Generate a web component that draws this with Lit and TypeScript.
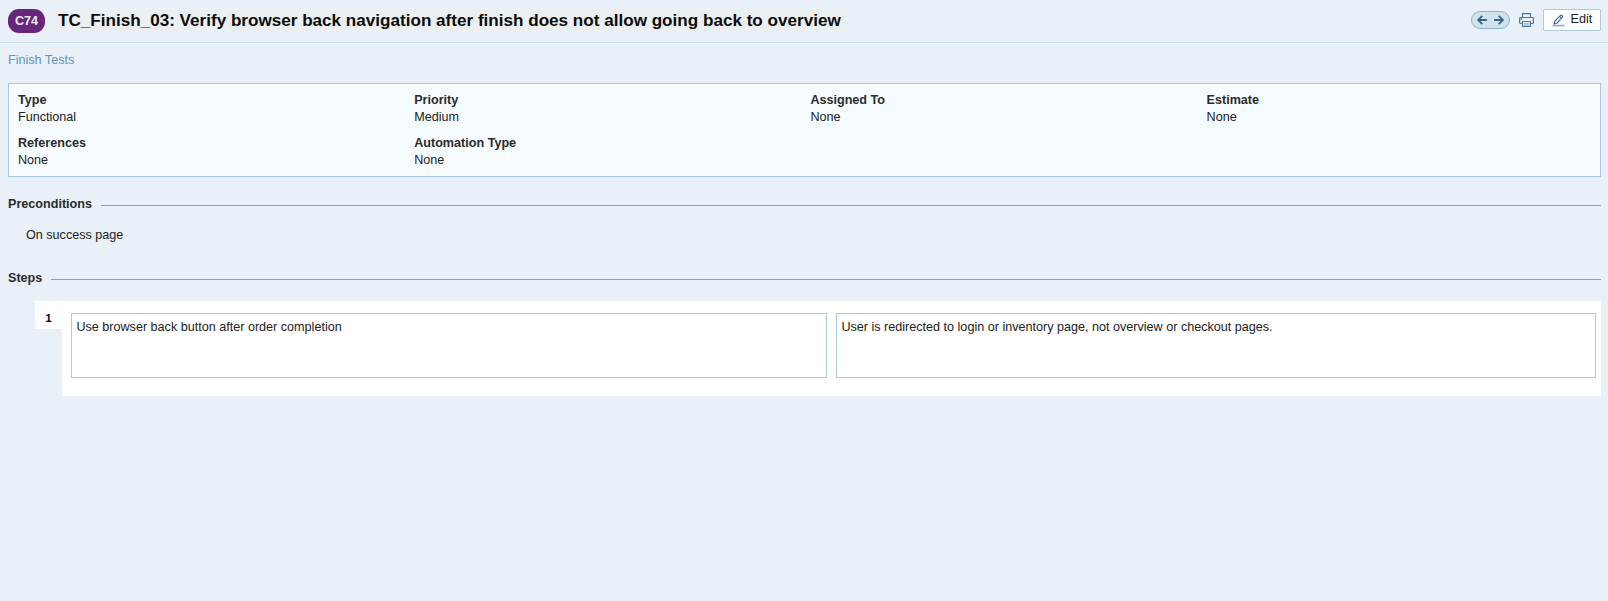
import { LitElement, html, css } from "lit";
import { customElement } from "lit/decorators.js";

const FIELDS = [
  ["Type", "Functional"],
  ["Priority", "Medium"],
  ["Assigned To", "None"],
  ["Estimate", "None"],
  ["References", "None"],
  ["Automation Type", "None"],
];

const STEPS = [
  {
    action: "Use browser back button after order completion",
    expected: "User is redirected to login or inventory page, not overview or checkout pages.",
  },
];

@customElement("app-root")
export class AppRoot extends LitElement {
  static styles = css`
    :host {
      display: block;
      box-sizing: border-box;
      min-height: 601px;
      background: #e9f0f7;
      color: #222;
      font: 12.6px/17px "Liberation Sans", Arial, sans-serif;
    }
    * { box-sizing: border-box; }
    .header {
      display: flex;
      align-items: flex-start;
      height: 43px;
      padding: 9px 7px 0 8px;
      border-bottom: 1px solid #cbdfea;
    }
    .badge {
      width: 37px;
      height: 24px;
      border-radius: 11px;
      background: #66267b;
      color: #f3e9f5;
      font-weight: bold;
      line-height: 24px;
      text-align: center;
    }
    .title {
      margin: 0 0 0 8px;
      padding: 0 5px;
      height: 23px;
      background: #ebeff2;
      color: #0c0c0c;
      font-size: 17.1px;
      line-height: 23px;
      font-weight: bold;
      white-space: nowrap;
    }
    .tools { display: flex; margin-left: auto; }
    .nav {
      display: flex;
      justify-content: space-between;
      align-items: center;
      width: 39px;
      height: 18px;
      margin-top: 2px;
      padding: 0 5px;
      border: 1px solid #8db6d0;
      border-radius: 9px;
      background: #d0e2ec;
    }
    .print { margin: 4px 0 0 9px; }
    .edit {
      display: flex;
      width: 58px;
      height: 22px;
      margin-left: 9px;
      padding: 0 0 0 8px;
      border: 1px solid #adc9dd;
      border-radius: 1px;
      background: #fff;
      line-height: 18px;
      color: #222233;
    }
    .edit svg { margin: 4px 5.6px 0 0; flex: none; }
    svg { display: block; }
    .crumb { padding: 9px 8px 0; height: 40px; color: #5b97c1; }
    .card {
      display: grid;
      grid-template-columns: repeat(4, 396.2px);
      row-gap: 9px;
      height: 94px;
      margin: 0 7px 0 8px;
      padding: 8px 0 0 9px;
      border: 1px solid #a9c8dc;
      background: #f6fbff;
      align-content: start;
      overflow: hidden;
    }
    .label { font-weight: bold; color: #2b2b2b; }
    .section {
      display: flex;
      align-items: flex-start;
      margin: 0 7px 0 8px;
      font-weight: bold;
      color: #2b2b2b;
    }
    .section::after {
      content: "";
      flex: 1;
      height: 1px;
      margin: 9px 0 0 9px;
      background: #7ba6c9;
    }
    .pre-head { margin-top: 19px; }
    .pre { padding: 14px 0 0 26px; height: 57px; }
    .step { display: flex; align-items: flex-start; margin: 14px 7px 0 35px; }
    .num {
      width: 27px;
      height: 28px;
      background: #fff;
      color: #190014;
      font-size: 11.6px;
      font-weight: bold;
      line-height: 34px;
      text-align: center;
    }
    .body {
      display: grid;
      grid-template-columns: 756px 760px;
      column-gap: 9px;
      flex: 1;
      height: 95px;
      padding: 12px 5px 0 9px;
      background: #fff;
    }
    .cell { height: 65px; padding: 5px 4.4px; border: 1px solid #adc9d9; }
  `;

  render() {
    return html`
      <header class="header">
        <span class="badge">C74</span>
        <h1 class="title">TC_Finish_03: Verify browser back navigation after finish does not allow going back to overview</h1>
        <div class="tools">
          <div class="nav">
            <svg width="10" height="10" viewBox="0 0 10 10" fill="none" stroke="#346887" stroke-width="1.8"><path d="M9.9 5H1.3M5.3 .8L1.1 5l4.2 4.2" /></svg>
            <svg width="10" height="10" viewBox="0 0 10 10" fill="none" stroke="#346887" stroke-width="1.8"><path d="M.1 5h8.6M4.7 .8l4.2 4.2-4.2 4.2" /></svg>
          </div>
          <svg class="print" width="15" height="14" viewBox="0 0 15 14" fill="none" stroke="#4b7b9b" stroke-width="1.15">
            <path d="M3.5 4V.6h8V4M3.5 10.5H1.6a1 1 0 0 1-1-1V5.5q0-1 1-1h11.8q1 0 1 1v4a1 1 0 0 1-1 1h-1.9" />
            <path d="M3.5 8.5h8v4.9h-8z" fill="#e9f0f7" />
            <path d="M5 10.5h5M5 11.8h5" stroke="#a2c5dd" />
            <path d="M1.3 6.1h2" stroke="#28a878" stroke-width="1.4" />
          </svg>
          <div class="edit">
            <svg width="13" height="13" viewBox="0 0 13 13" fill="none" stroke="#3f6c8a" stroke-width="1.15">
              <path d="M2.2 10l.7-3L8.6 1.3q.7-.6 1.4 0l.5.5q.6.7 0 1.4L4.9 9.2zM7.6 2.4l1.9 1.9" />
              <path d="M.5 11.6h12" stroke="#85b1d0" stroke-width="1.6" />
            </svg>Edit
          </div>
        </div>
      </header>
      <div class="crumb">Finish Tests</div>
      <section class="card">
        ${FIELDS.map(([k, v]) => html`<div><div class="label">${k}</div><div>${v}</div></div>`)}
      </section>
      <div class="section pre-head">Preconditions</div>
      <div class="pre">On success page</div>
      <div class="section">Steps</div>
      ${STEPS.map((s, i) => html`
        <div class="step">
          <div class="num">${i + 1}</div>
          <div class="body">
            <div class="cell">${s.action}</div>
            <div class="cell">${s.expected}</div>
          </div>
        </div>`)}
    `;
  }
}
